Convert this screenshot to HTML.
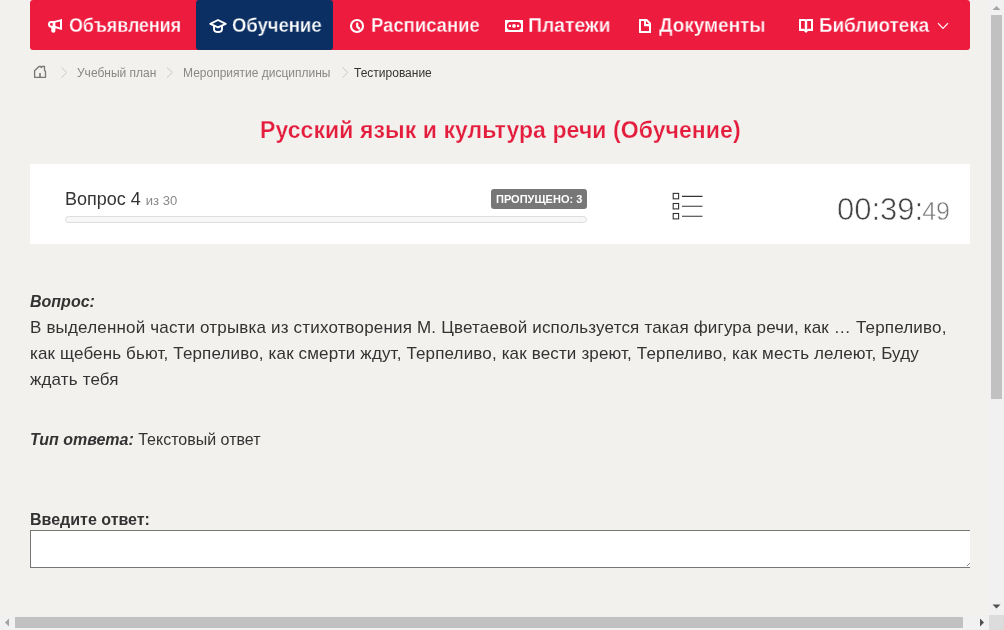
<!DOCTYPE html>
<html><head><meta charset="utf-8">
<style>
html,body{margin:0;padding:0;width:1004px;height:630px;overflow:hidden;background:#f2f1ee;}
body{font-family:"Liberation Sans",sans-serif;position:relative;}
.a{position:absolute;white-space:nowrap;will-change:transform;}
#nav{position:absolute;left:30px;top:0;width:940px;height:50px;background:#ed1c3f;border-radius:3px;}
#act{position:absolute;left:196px;top:0;width:137px;height:50px;background:#0b2f63;border-radius:3px;}
.nt{font-weight:bold;font-size:20px;line-height:22px;color:#fff;transform-origin:0 0;-webkit-text-stroke:0.3px #ed1c3f;}
.bc{font-size:12px;line-height:14px;color:#888;}
#title{font-weight:bold;font-size:23px;line-height:27px;color:#e41d3d;-webkit-text-stroke:0.25px #f2f1ee;}
#panel{position:absolute;left:30px;top:164px;width:940px;height:80px;background:#fff;}
#prog{position:absolute;left:65px;top:216px;width:520px;height:5px;border:1px solid #ddd;background:#f7f7f7;border-radius:4px;}
#badge{position:absolute;left:491px;top:189px;width:96px;height:20px;background:#777;border-radius:3px;}
.q{font-size:17px;line-height:26px;color:#333;letter-spacing:0.15px;}
#ta{position:absolute;left:30px;top:530px;width:939px;height:36px;background:#fff;border:1px solid #767676;border-right:0;box-sizing:content-box;}
#vs{position:absolute;left:989px;top:0;width:15px;height:615px;background:#f1f1f1;}
#hs{position:absolute;left:0;top:615px;width:989px;height:15px;background:#f1f1f1;}
#corner{position:absolute;left:989px;top:615px;width:15px;height:15px;background:#dcdcdc;}
#vthumb{position:absolute;left:991px;top:15px;width:11px;height:384px;background:#c1c1c1;}
#hthumb{position:absolute;left:15px;top:617px;width:948px;height:11px;background:#c1c1c1;}
</style></head><body>
<div id="nav"></div>
<div id="act"></div>
<div class="a nt" style="left:69px;top:14px;transform:scaleX(0.893)">Объявления</div>
<div class="a nt" style="left:231.5px;top:14px;transform:scaleX(0.923);-webkit-text-stroke-color:#0b2f63">Обучение</div>
<div class="a nt" style="left:370.5px;top:14px;transform:scaleX(0.924)">Расписание</div>
<div class="a nt" style="left:528px;top:14px;transform:scaleX(0.968)">Платежи</div>
<div class="a nt" style="left:659px;top:14px;transform:scaleX(0.948)">Документы</div>
<div class="a nt" style="left:819px;top:14px;transform:scaleX(0.938)">Библиотека</div>

<div class="a bc" style="left:77px;top:66px">Учебный план</div>
<div class="a bc" style="left:183px;top:66px">Мероприятие дисциплины</div>
<div class="a bc" style="left:354px;top:66px;color:#333">Тестирование</div>

<div class="a" id="title" style="left:260px;top:117px;letter-spacing:0.08px">Русский язык и культура речи (Обучение)</div>

<div id="panel"></div>
<div class="a" style="left:65px;top:189px;font-size:18px;line-height:21px;color:#333">Вопрос 4 <span style="font-size:13px;color:#888">из 30</span></div>
<div id="prog"></div>
<div id="badge"></div>
<div class="a" style="left:496px;top:193px;font-size:11px;line-height:12px;font-weight:bold;color:#fff">ПРОПУЩЕНО: 3</div>
<div class="a" style="left:837px;top:192px;font-size:31px;line-height:36px;color:#444;-webkit-text-stroke:0.6px #fff">00:39:<span style="font-size:25px;color:#777;-webkit-text-stroke:0.5px #fff;margin-left:-1px">49</span></div>

<div class="a q" style="left:30px;top:289px;font-size:16px;font-weight:bold;font-style:italic;letter-spacing:0">Вопрос:</div>
<div class="a q" style="left:30px;top:315px;letter-spacing:0.175px">В выделенной части отрывка из стихотворения М. Цветаевой используется такая фигура речи, как … Терпеливо,</div>
<div class="a q" style="left:30px;top:341px">как щебень бьют, Терпеливо, как смерти ждут, Терпеливо, как вести зреют, Терпеливо, как месть лелеют, Буду</div>
<div class="a q" style="left:30px;top:367px">ждать тебя</div>

<div class="a q" style="left:30px;top:427px;font-size:16px;letter-spacing:0"><b><i>Тип ответа:</i></b> Текстовый ответ</div>
<div class="a q" style="left:30px;top:507px;font-size:16px;letter-spacing:0;font-weight:bold">Введите ответ:</div>
<div id="ta"></div>

<div id="vs"></div><div id="hs"></div><div id="corner"></div>
<div id="vthumb"></div><div id="hthumb"></div>

<svg class="a" style="left:0;top:0" width="1004" height="630" viewBox="0 0 1004 630">
 <!-- megaphone -->
 <path fill="#fff" fill-rule="evenodd" d="M51.3,20.9 H54.3 L62,18.9 V30 L54.3,27.8 H55.4 V31 Q55.4,32.7 53.35,32.7 Q51.3,32.7 51.3,31 V27.8 Q48,27.8 48,24.35 Q48,20.9 51.3,20.9 Z M51.2,22.9 Q50,22.9 50,24.35 Q50,25.8 51.2,25.8 H52.7 V22.9 Z M55.4,22.5 L60,21.4 V27.5 L55.4,26.1 Z"/>
 <!-- grad cap -->
 <g fill="none" stroke="#fff" stroke-width="1.9" stroke-linejoin="round">
  <path d="M210.3,23.9 L218,20 L225.7,23.9 L218,27.3 Z"/>
  <path d="M214,25.5 V29.3 Q214,32 218,32 Q222,32 222,29.3 V25.5"/>
 </g>
 <!-- clock -->
 <g fill="none" stroke="#fff" stroke-width="2.1" stroke-linecap="round" stroke-linejoin="round">
  <circle cx="357" cy="26" r="6"/>
  <path d="M357.2,23.6 V26.6 L359.3,28.6" stroke-width="2.2"/>
 </g>
 <!-- money -->
 <rect x="505" y="20" width="18" height="12" fill="#fff"/>
 <path d="M509,22 H519 L521,24 V28 L519,30 H509 L507,28 V24 Z" fill="#ed1c3f"/>
 <rect x="508.8" y="24.8" width="2.2" height="2.2" fill="#fff"/>
 <rect x="517" y="24.8" width="2.2" height="2.2" fill="#fff"/>
 <circle cx="514" cy="25.9" r="1.9" fill="#fff"/>
 <!-- doc -->
 <path fill="#fff" fill-rule="evenodd" d="M639,19 H647 L651,23 V33 H639 Z M641,21 V31 H649 V26.3 H644 V21 Z M646,21 V24 H649 Z"/>
 <!-- book -->
 <path fill="#fff" fill-rule="evenodd" d="M799,19 H805.2 L806,19.6 L806.8,19 H813 V31 H808 L806,32.9 L804,31 H799 Z M801,21 V28.8 H803.6 L804.8,29.5 V21 Z M807.2,21 V29.5 L808.4,28.8 H811 V21 Z"/>
 <!-- chevron -->
 <path d="M938,23.2 L943,28.5 L948,23.2" fill="none" stroke="#fff" stroke-width="1.2"/>
 <!-- home -->
 <path d="M34.6,77.3 V70.8 L39,66.5 H40.8 L41.4,67.6 L42,66.5 H44.5 V70.5 L45.5,71.5 V77.3 Z" fill="none" stroke="#777" stroke-width="1.3" stroke-linejoin="round"/>
 <rect x="39.2" y="73" width="1.6" height="4.5" fill="#777"/>
 <!-- bc chevrons -->
 <g fill="none" stroke="#c8c8c8" stroke-width="1">
  <path d="M61.5,67.5 L66.8,72.5 L61.5,77.5"/>
  <path d="M167,67.5 L172.3,72.5 L167,77.5"/>
  <path d="M342.5,67.5 L347.8,72.5 L342.5,77.5"/>
 </g>
 <!-- list icon -->
 <g fill="none" stroke="#333" stroke-width="1.1">
  <rect x="673.2" y="193.4" width="5.4" height="5.4"/>
  <rect x="673.2" y="203.5" width="5.4" height="5.4"/>
  <rect x="673.2" y="213.5" width="5.4" height="5.4"/>
  <path d="M682,196.4 H702.5 M682,206.3 H702.5 M682,216.2 H702.5"/>
 </g>
 <!-- textarea resize grip -->
 <path d="M967,566 L970,563" stroke="#555" stroke-width="1" stroke-dasharray="1 0.4"/>
 <!-- scrollbar arrows -->
 <path d="M992.5,10 L996.5,6 L1000.5,10 Z" fill="#a3a3a3"/>
 <path d="M992.5,604.5 L996.5,608.5 L1000.5,604.5 Z" fill="#505050"/>
 <path d="M9,618.5 L5,622.5 L9,626.5 Z" fill="#a3a3a3"/>
 <path d="M980,618.5 L984,622.5 L980,626.5 Z" fill="#505050"/>
</svg>
</body></html>
